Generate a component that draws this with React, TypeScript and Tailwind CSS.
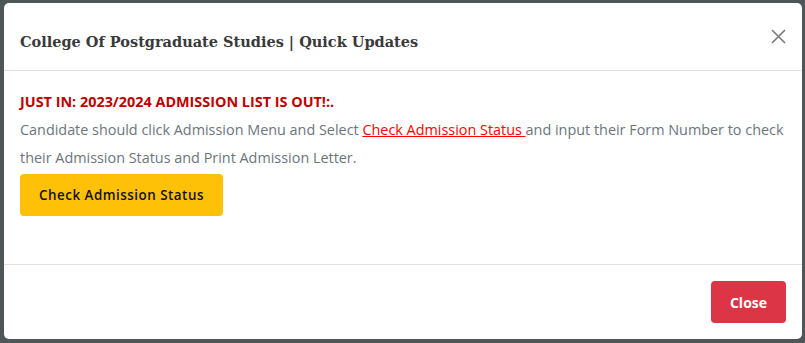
export default function App() {
  return (
    <div className="h-[343px] w-[805px] overflow-hidden bg-[#4f5657] pt-[3px] pl-[4px] font-['Open_Sans',sans-serif]">
      <div className="flex h-[336px] w-[798px] flex-col rounded-[5px] bg-white">
        <div className="flex h-[68px] items-center justify-between border-b border-[#dee2e6] pl-[16px] pr-[16px]">
          <h5 className="mt-[10px] font-['DejaVu_Serif',serif] text-[14.5px] font-bold text-[#3a3a3a]">
            College Of Postgraduate Studies | Quick Updates
          </h5>
          <button className="flex h-[14px] w-[16px] items-center justify-center">
            <svg width="15" height="15" viewBox="0 0 15 15">
              <path d="M1 1L14 14M14 1L1 14" stroke="#7a7a7a" strokeWidth="1.6" fill="none" />
            </svg>
          </button>
        </div>
        <div className="h-[193px] px-[16px] pt-[17px]">
          <p className="text-[14.4px] leading-[28px] font-bold text-[#c00000]">
            JUST IN: 2023/2024 ADMISSION LIST IS OUT!:.
          </p>
          <p className="text-[14.4px] leading-[28px] text-[#6c757d]">
            Candidate should click Admission Menu and Select{" "}
            <a href="#" className="text-[#ff0000] underline">
              Check Admission Status{" "}
            </a>
            and input their Form Number to check their Admission Status and Print Admission Letter.
          </p>
          <button className="mt-[2px] h-[42px] w-[203px] rounded-[4px] bg-[#ffc107] text-[13.4px] font-semibold tracking-[0.5px] text-[#111]">
            Check Admission Status
          </button>
        </div>
        <div className="flex flex-1 items-start justify-end border-t border-[#dee2e6] pt-[16px] pr-[16px]">
          <button className="h-[42px] w-[75px] rounded-[4px] bg-[#dc3545] text-[14px] font-bold text-white">
            Close
          </button>
        </div>
      </div>
    </div>
  );
}
